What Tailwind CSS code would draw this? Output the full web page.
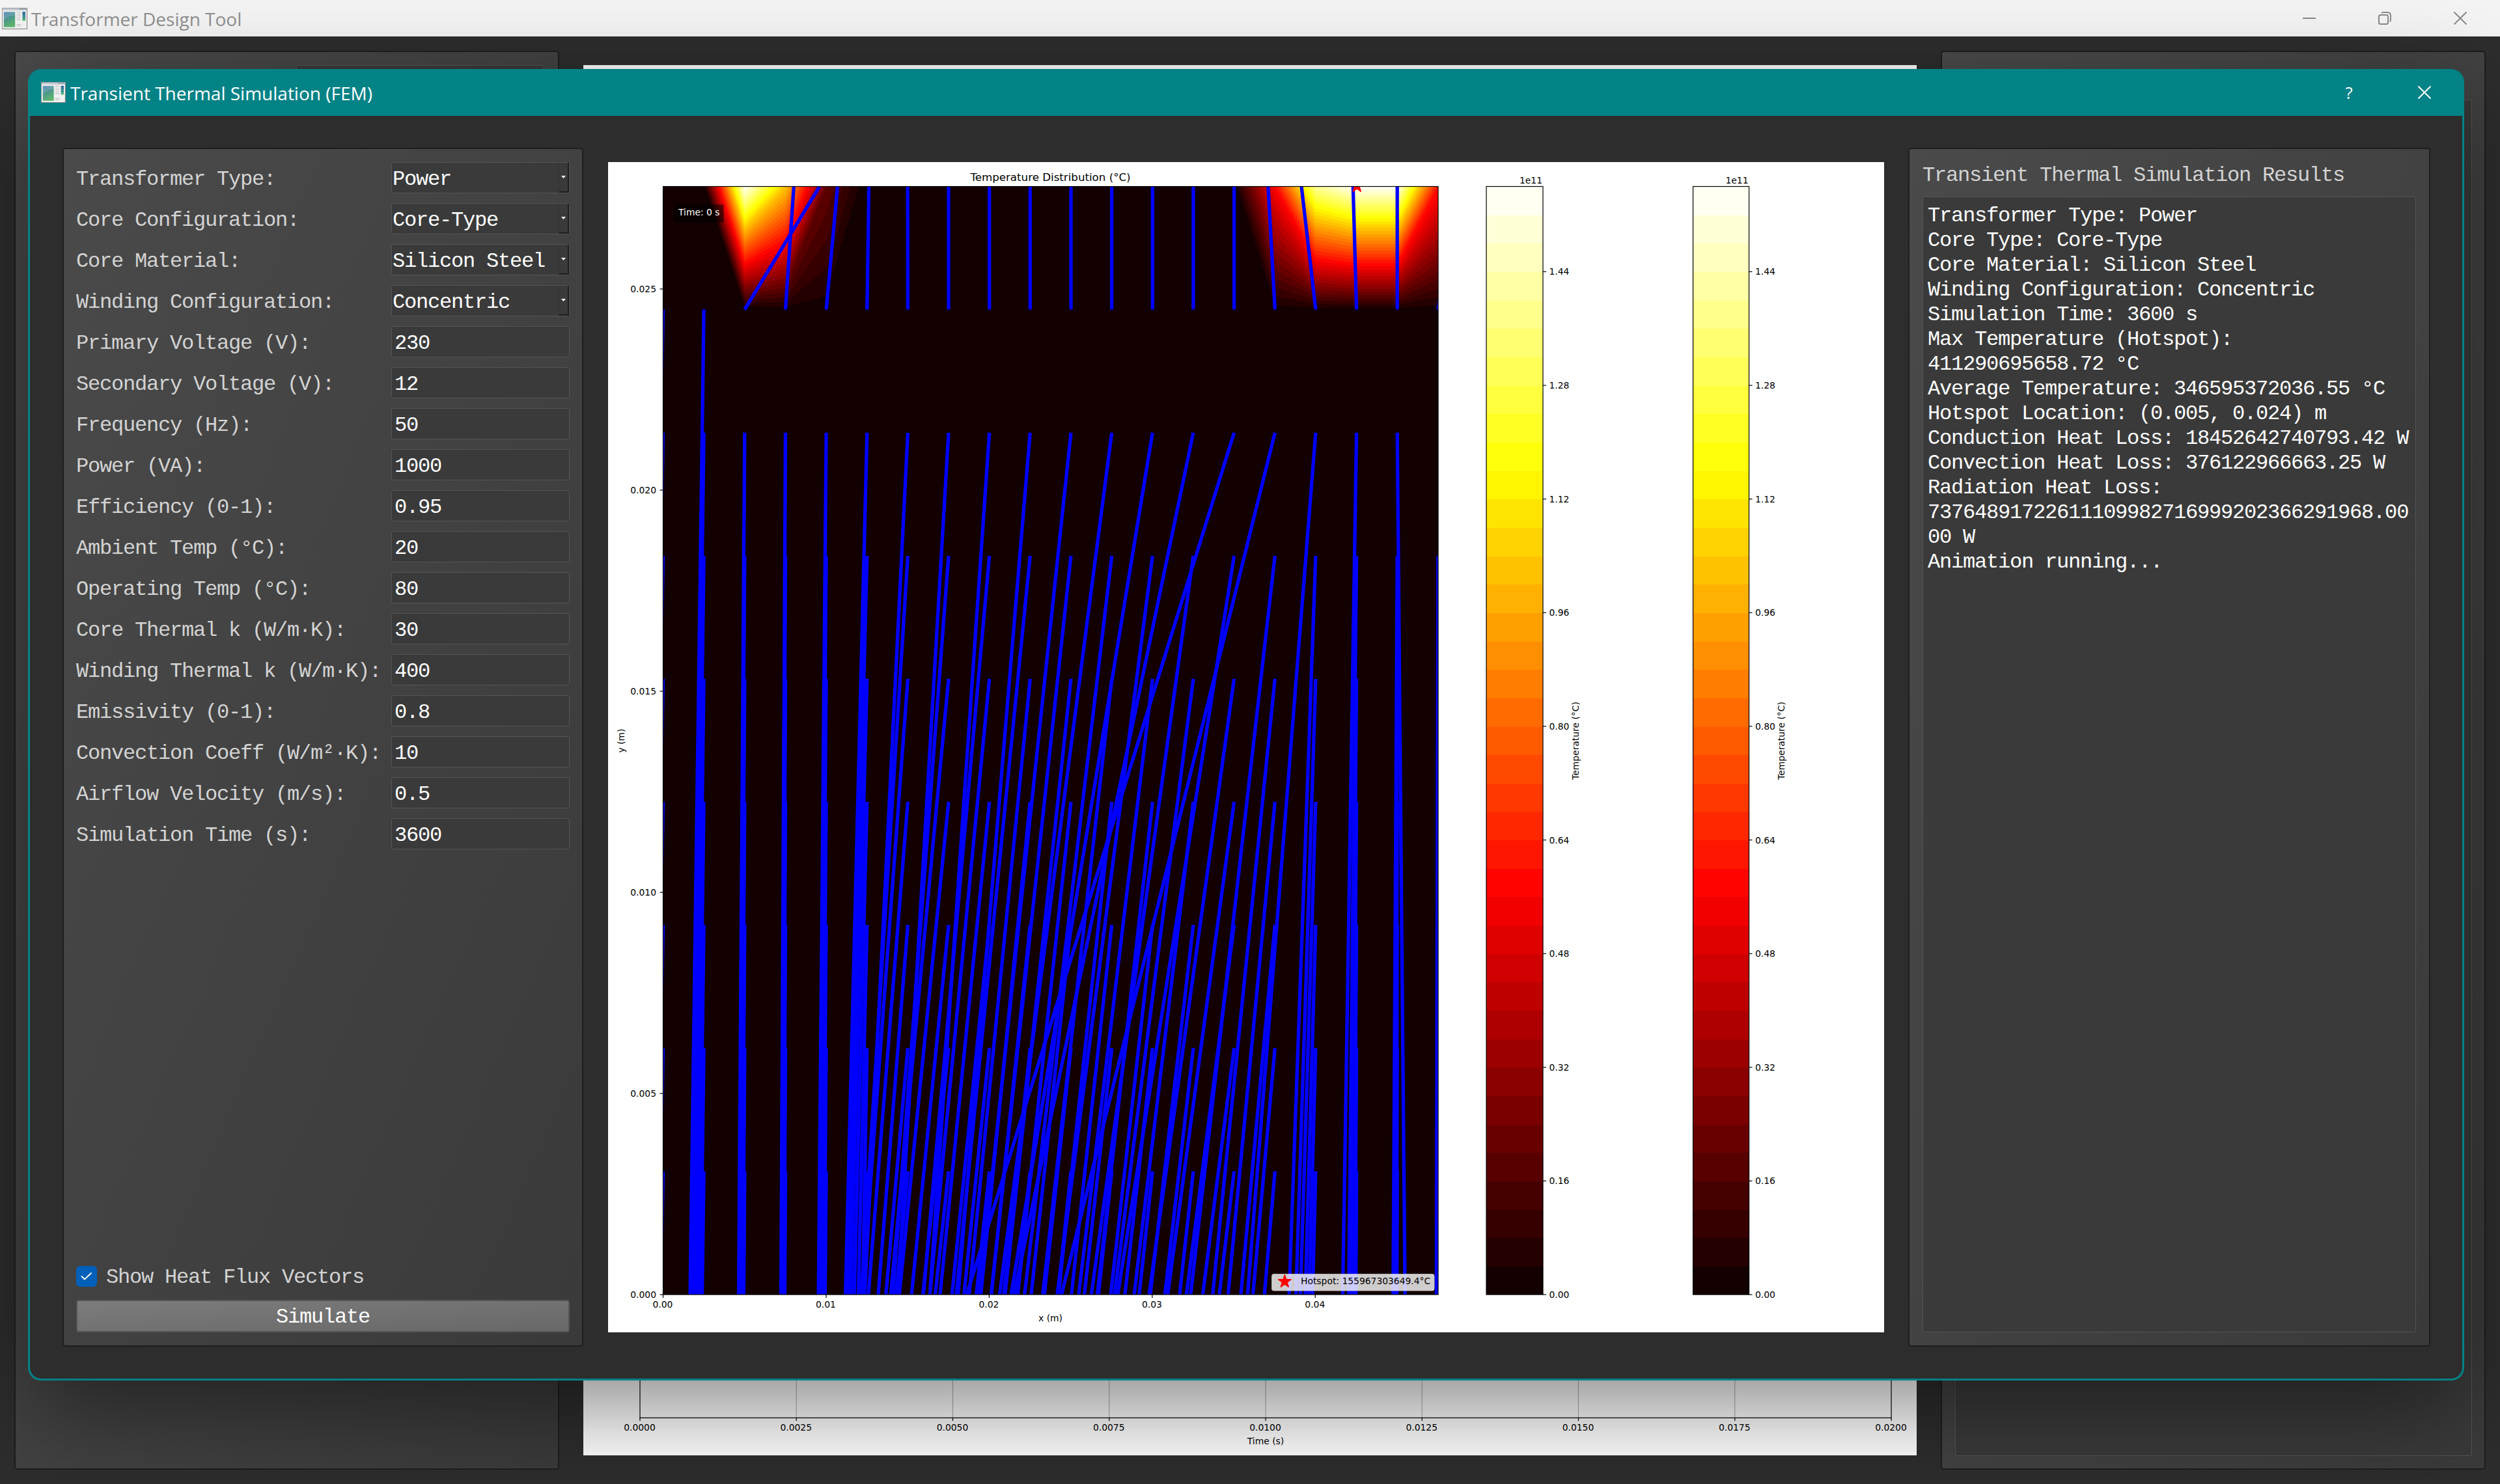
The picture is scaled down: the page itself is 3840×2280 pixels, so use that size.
<!DOCTYPE html>
<html lang="en">
<head>
<meta charset="utf-8">
<title>Transformer Design Tool</title>
<script src="https://cdn.jsdelivr.net/npm/@tailwindcss/browser@4"></script>
</head>
<body class="bg-[#2d2d2d]">
<svg class="absolute w-0 h-0" aria-hidden="true">
  <defs>
    <linearGradient id="ga" x1="0" y1="0" x2="0.4" y2="1"><stop offset="0" stop-color="#3f78b4"/><stop offset="1" stop-color="#5cb56a"/></linearGradient>
    <linearGradient id="gb" x1="0" y1="0" x2="0" y2="1"><stop offset="0" stop-color="#2f62a8"/><stop offset="1" stop-color="#55bd80"/></linearGradient>
    <symbol id="appicon" viewBox="0 0 39 33">
      <rect x="0.5" y="0.5" width="38" height="32" fill="#f1f1f1" stroke="#9a9a9a"/>
      <rect x="1" y="1" width="37" height="3" fill="#c3cad3"/>
      <rect x="27" y="1.3" width="10" height="1.4" fill="#8e99a8"/>
      <rect x="2.5" y="6" width="18" height="24" fill="url(#ga)" stroke="#dfe8e4" stroke-width="0.8"/>
      <path d="M3 19 Q10 11 20 12 V6.500 H3 Z" fill="#ffffff" fill-opacity="0.16"/>
      <path d="M22.500 6.500h6.500M22.500 9.500h6.500M22.500 12.500h6.500M22.500 15.500h6.500M22.500 18.500h6.500M22.500 25.500h6.500M22.500 28h6.500" stroke="#bdbdbd" stroke-width="1.200"/>
      <rect x="31.500" y="6" width="4.500" height="14" fill="url(#gb)"/>
      <path d="M31.500 10h4.500M31.500 15h4.500" stroke="#2a6f80" stroke-width="0.6"/>
      <path d="M0.500 32.500h38v-32" fill="none" stroke="#7c7c7c"/>
    </symbol>
  </defs>
</svg>

<div class="relative w-[3840px] h-[2280px] overflow-hidden bg-[#2d2d2d] font-['Open_Sans',sans-serif]">

  <!-- Main window -->
  <div class="flex flex-col h-full">
    <header class="h-[56px] shrink-0 bg-[#f3f3f3] flex items-center justify-between pl-[3px] pr-[51px] text-[#8f8f8f]">
      <div class="flex items-center gap-[6px]">
        <svg class="w-[39px] h-[33px]"><use href="#appicon"/></svg>
        <span class="text-[28px] leading-[56px] whitespace-nowrap pt-[2px]">Transformer Design Tool</span>
      </div>
      <div class="flex items-center gap-[96px]">
        <svg class="w-[20px] h-[20px]" viewBox="0 0 20 20" fill="none" stroke="#8a8a8a" stroke-width="2"><path d="M0 10h20"/></svg>
        <svg class="w-[20px] h-[20px]" viewBox="0 0 20 20" fill="none" stroke="#8a8a8a" stroke-width="2"><rect x="1" y="5" width="14" height="14" rx="2.500"/><path d="M5 2.200Q5.500 1 8 1H14Q19 1 19 6V12Q19 14.500 17.500 15"/></svg>
        <svg class="w-[20px] h-[20px]" viewBox="0 0 20 20" fill="none" stroke="#8a8a8a" stroke-width="2"><path d="M0.500 0.500l19 19M19.500 0.500l-19 19"/></svg>
      </div>
    </header>
    <main class="flex flex-1 items-start pl-[22px]">
      <section class="w-[837px] h-[2180px] mt-[22px] rounded-[5px] border-2 border-[#1e1e1e] bg-linear-to-br from-[#4a4a4a] to-[#3a3a3a] pl-[431px] pt-[20px]">
        <div class="w-[381px] h-[48px] border border-[#555] rounded-[3px] bg-[#3a3a3a]"></div>
      </section>
      <svg class="w-[2048px] h-[2136px] mt-[44px] ml-[37px] bg-white" viewBox="896 100 2048 2136" id="backplot"></svg>
      <section class="w-[837px] h-[2180px] mt-[22px] ml-[37px] rounded-[5px] border-2 border-[#1e1e1e] bg-linear-to-br from-[#4a4a4a] to-[#3a3a3a] pl-[20px] pt-[73px]">
        <div class="w-[794px] h-[2084px] border border-[#555] rounded-[3px] bg-[#3a3a3a]"></div>
      </section>
    </main>
  </div>

  <!-- Simulation dialog -->
  <div class="absolute left-[43px] top-[106px] w-[3742px] h-[2015px] rounded-[20px] overflow-visible shadow-[0_44px_140px_rgba(0,0,0,0.46)]">
  <div class="w-full h-full rounded-[20px] overflow-hidden border-3 border-t-0 border-[#048387] bg-[#2d2d2d] flex flex-col">
    <header class="h-[72px] shrink-0 bg-[#048387] flex items-center justify-between pl-[17px] pr-[48px] text-white">
      <div class="flex items-center gap-[7px]">
        <svg class="w-[38px] h-[32px]"><use href="#appicon"/></svg>
        <span class="text-[28px] leading-[72px] whitespace-nowrap pt-[1px]">Transient Thermal Simulation (FEM)</span>
      </div>
      <div class="flex items-center gap-[96px]">
        <span class="text-[26px] leading-[72px] w-[20px] text-center">?</span>
        <svg class="w-[20px] h-[20px]" viewBox="0 0 20 20" fill="none" stroke="#fff" stroke-width="2"><path d="M0.500 0.500l19 19M19.500 0.500l-19 19"/></svg>
      </div>
    </header>

    <div class="flex items-start pl-[50px] pt-[49px] font-['Liberation_Mono',monospace] text-[32px] tracking-[-1.2px] text-[#d3d3d3]">
      <section class="w-[800px] h-[1842px] rounded-[5px] border-2 border-[#1e1e1e] bg-linear-to-br from-[#4a4a4a] to-[#3a3a3a] pl-[19px] pr-[19px] pt-[20px] pb-[20px] flex flex-col justify-between">
        <div class="flex flex-col gap-[15px]" id="form"></div>
        <div class="flex flex-col gap-[20px]">
          <div class="flex items-center h-[32px] gap-[14px]">
            <div class="w-[32px] h-[32px] rounded-[6px] bg-[#005fb8] flex items-center justify-center">
              <svg class="w-[18px] h-[14px]" viewBox="0 0 18 14" fill="none" stroke="#fff" stroke-width="1.800" stroke-linecap="round"><path d="M1.500 7l4.500 4.500L16 2"/></svg>
            </div>
            <span class="leading-[32px] pt-[3px]">Show Heat Flux Vectors</span>
          </div>
          <div class="h-[50px] rounded-[4px] border-2 border-[#555] bg-linear-to-br from-[#7c7c7c] to-[#686868] text-white text-center leading-[46px]"><span class="relative top-[2px]">Simulate</span></div>
        </div>
      </section>

      <svg class="w-[1960px] h-[1798px] mt-[22px] ml-[38px] bg-white shrink-0" viewBox="934 249 1960 1798" id="plot"></svg>

      <section class="w-[802px] h-[1842px] ml-[37px] rounded-[5px] border-2 border-[#1e1e1e] bg-linear-to-br from-[#4a4a4a] to-[#3a3a3a] pl-[20px] pt-[20px]">
        <div class="leading-[42px] whitespace-pre">Transient Thermal Simulation Results</div>
        <div class="mt-[11px] w-[758px] h-[1745px] border border-[#555] rounded-[3px] bg-[#3a3a3a] text-white pl-[7px] pt-[10px] leading-[38px] whitespace-pre">Transformer Type: Power
Core Type: Core-Type
Core Material: Silicon Steel
Winding Configuration: Concentric
Simulation Time: 3600 s
Max Temperature (Hotspot):
411290695658.72 °C
Average Temperature: 346595372036.55 °C
Hotspot Location: (0.005, 0.024) m
Conduction Heat Loss: 18452642740793.42 W
Convection Heat Loss: 376122966663.25 W
Radiation Heat Loss:
73764891722611109982716999202366291968.00
00 W
Animation running...</div>
      </section>
    </div>
  </div>
  </div>
</div>

<script>
// Form rows: [label, value, isSelect]
const rows = [
  ['Transformer Type:', 'Power', 1], ['Core Configuration:', 'Core-Type', 1],
  ['Core Material:', 'Silicon Steel', 1], ['Winding Configuration:', 'Concentric', 1],
  ['Primary Voltage (V):', '230'], ['Secondary Voltage (V):', '12'], ['Frequency (Hz):', '50'],
  ['Power (VA):', '1000'], ['Efficiency (0-1):', '0.95'], ['Ambient Temp (°C):', '20'],
  ['Operating Temp (°C):', '80'], ['Core Thermal k (W/m·K):', '30'], ['Winding Thermal k (W/m·K):', '400'],
  ['Emissivity (0-1):', '0.8'], ['Convection Coeff (W/m²·K):', '10'], ['Airflow Velocity (m/s):', '0.5'],
  ['Simulation Time (s):', '3600']
];
document.getElementById('form').innerHTML = rows.map(([l, v, s]) =>
  `<div class="flex h-[48px]"><label class="w-[484px] shrink-0 whitespace-pre leading-[48px] pt-[3px]">${l}</label>` +
  (s ? `<div class="w-[274px] shrink-0 flex justify-between border border-[#555] rounded-[3px] bg-[#3a3a3a] text-white"><span class="pl-px pt-[3px] leading-[46px]">${v}</span><span class="w-[16px] border-l border-l-[#333] border-r-2 border-b-2 border-r-[#1e1e1e] border-b-[#1e1e1e] flex items-center justify-center"><svg class="w-[7px] h-[4px]" viewBox="0 0 7 4"><path d="M0 0h7L3.500 4z" fill="#fff"/></svg></span></div>`
     : `<div class="w-[274px] shrink-0 border border-[#555] rounded-[3px] bg-[#3a3a3a] text-white pl-[4px] pt-[3px] leading-[46px]">${v}</div>`) +
  `</div>`).join('');

const F = `font-family="DejaVu Sans, sans-serif" font-size="13.89" letter-spacing="0"`;
const txt = (x, y, s, a = 'start', extra = '') => `<text x="${x}" y="${y}" text-anchor="${a}" ${F} ${extra}>${s}</text>`;
const line = (x1, y1, x2, y2, c = '#000', w = 1.2) => `<line x1="${x1}" y1="${y1}" x2="${x2}" y2="${y2}" stroke="${c}" stroke-width="${w}"/>`;

// "hot" colour map, t in 0..1
function hot(t) {
  const r = Math.min(1, 0.0416 + 0.9584 * t / 0.365079);
  const g = Math.max(0, Math.min(1, (t - 0.365079) / 0.380953));
  const b = Math.max(0, Math.min(1, (t - 0.746032) / 0.253968));
  return `rgb(${Math.round(r * 255)},${Math.round(g * 255)},${Math.round(b * 255)})`;
}

// Temperature plot
const X0 = 1018.5, DX = 62.65, Y0 = 286.5, Y1 = 1989, XR = 2209;
const cx = i => X0 + DX * i;
const ROW = [286.5, 475.5, 664.8, 854, 1043, 1232, 1421, 1610.3, 1799.6];
let p = `<defs><clipPath id="ax"><rect x="${X0}" y="${Y0}" width="${XR - X0}" height="${Y1 - Y0}"/></clipPath></defs>`;
p += `<rect x="${X0}" y="${Y0}" width="${XR - X0}" height="${Y1 - Y0}" fill="${hot(0.5 / 39)}"/>`;

const top_ = new Array(20).fill(0), bot = new Array(20).fill(0);
Object.entries({2: 1.56, 3: 1.03, 4: 0.2, 15: 0.57, 16: 1.4, 17: 1.56, 18: 1.56, 19: 0.6}).forEach(([k, v]) => top_[k] = v);
[3, 4, 15, 16, 17, 18, 19].forEach(k => bot[k] = 0.02);
p += `<g clip-path="url(#ax)" shape-rendering="crispEdges">`;
for (let c = 0; c < 19; c++) {
  const q = [[cx(c), ROW[0], top_[c]], [cx(c + 1), ROW[0], top_[c + 1]], [cx(c + 1), ROW[1], bot[c + 1]], [cx(c), ROW[1], bot[c]]];
  for (let k = 1; k < 39; k++) {
    const L = k * 0.04, out = [];
    for (let e = 0; e < 4; e++) {
      const a = q[e], b = q[(e + 1) % 4];
      if (a[2] >= L) out.push([a[0], a[1]]);
      if ((a[2] >= L) !== (b[2] >= L)) {
        const f = (L - a[2]) / (b[2] - a[2]);
        out.push([a[0] + f * (b[0] - a[0]), a[1] + f * (b[1] - a[1])]);
      }
    }
    if (out.length > 2) p += `<polygon points="${out.map(o => o[0].toFixed(1) + ',' + o[1].toFixed(1)).join(' ')}" fill="${hot((k + 0.5) / 39)}"/>`;
  }
}
p += `</g>`;

// Heat flux vectors; leftward drift per unit of descent, rows 2..8 for each column
const S = {
  0: [.02, .02, .02, .02, .02, .02, .02],
  1: [.0139, .0139, .0139, .0139, .0139, .0139, .0139],
  2: [.007, .007, .007, .007, .007, .007, .007],
  3: [.0052, .0052, .0052, .0052, .0052, .0052, .0052],
  4: [.009, .009, .009, .009, .009, .009, .009],
  5: [.025, .026, .0265, .026, .0235, .0175, .02],
  6: [.050, .063, .074, .080, .080, .089, .095],
  7: [.059, .0755, .094, .1, .1, .104, .108],
  8: [.069, .0893, .0966, .1, .101, .103, .106],
  9: [.0836, .1, .099, .1, .105, .107, .106],
  10: [.106, .108, .107, .108, .1075, .108, .106],
  11: [.130, .118, .112, .108, .109, .111, .108],
  12: [.164, .129, .12, .112, .113, .112, .108],
  13: [.208, .138, .128, .12, .1165, .1154, .1115],
  14: [.31, .1575, .138, .1347, .129, .127, .12],
  15: [.2475, .114, .101, .095, .092, .089, .0847],
  16: [.079, .036, .032, .031, .028, .027, .025],
  17: [.016, .0106, .0085, .0078, .0065, .006, .005],
  18: [-.009, .0056, .0045, .004, .003, .003, .003],
  19: [0, .0022, .0018, .0015, .001, .001, .001]
};
const blue = (x1, y1, x2, y2) => line(x1.toFixed(1), y1, x2.toFixed(1), y2, '#0000ff', 5.3);
p += `<g clip-path="url(#ax)">`;
const upTop = {2: 1258.8, 3: 1219.3, 4: 1286.5, 5: 1334.6, 6: 1394.2, 15: 1947.8, 16: 1999, 17: 2078.3};
for (let c = 2; c < 19; c++) p += blue(cx(c), ROW[1], upTop[c] || cx(c), Y0);
p += blue(cx(0), ROW[1], cx(0) - 30, Y1) + blue(cx(1), ROW[1], 1060, Y1) + blue(cx(19), ROW[1], cx(19) + 30, Y0);
for (let c = 0; c < 20; c++) for (let r = 2; r < 9; r++) {
  if (c === 19 && r === 2) continue;
  p += blue(cx(c), ROW[r], cx(c) - S[c][r - 2] * (Y1 + 6 - ROW[r]), Y1 + 6);
}
const star = (x, y, R) => {
  let s = '';
  for (let i = 0; i < 10; i++) {
    const a = -Math.PI / 2 + i * Math.PI / 5, q = i % 2 ? R * 0.382 : R;
    s += (x + q * Math.cos(a)).toFixed(2) + ',' + (y + q * Math.sin(a)).toFixed(2) + ' ';
  }
  return `<polygon points="${s}" fill="#ff0000" stroke="#ff0000" stroke-width="1.4" stroke-linejoin="bevel"/>`;
};
p += star(2084.3, 286, 10.5) + `</g>`;
p += `<rect x="${X0}" y="${Y0}" width="${XR - X0}" height="${Y1 - Y0}" fill="none" stroke="#000" stroke-width="1.200"/>`;
p += `<text x="1613.500" y="277.500" text-anchor="middle" font-family="DejaVu Sans, sans-serif" font-size="16.670" letter-spacing="0">Temperature Distribution (°C)</text>`;
p += `<rect x="1036" y="315" width="75" height="26" fill="#000" fill-opacity="0.5" stroke="#000" stroke-opacity="0.5"/>` + txt(1042, 331, 'Time: 0 s', 'start', 'fill="#fff"');
for (let i = 0; i < 5; i++) { const x = X0 + 250.45 * i; p += line(x, Y1, x, Y1 + 5) + txt(x - 0.5, 2009, '0.0' + i, 'middle'); }
for (let i = 0; i < 6; i++) { const y = Y1 - 309 * i; p += line(X0 - 5, y, X0, y) + txt(1008, y + 5, (i * 0.005).toFixed(3), 'end'); }
p += txt(1613.5, 2030, 'x (m)', 'middle') + `<g transform="translate(959 1138) rotate(-90)">${txt(0, 0, 'y (m)', 'middle')}</g>`;
p += `<rect x="1953.500" y="1957.500" width="249.500" height="25.500" rx="3" fill="#fff" fill-opacity="0.8" stroke="#ccc" stroke-opacity="0.8"/>` + star(1973.3, 1969, 10.5) + txt(1998, 1973, 'Hotspot: 155967303649.4°C');

// Colour bars
[[2283, 2370, 2425], [2600.5, 2686.5, 2741]].forEach(([a, b, t]) => {
  const h = (Y1 - Y0) / 39;
  for (let k = 0; k < 39; k++) p += `<rect x="${a}" y="${(Y1 - h * (k + 1)).toFixed(2)}" width="${b - a}" height="${(h + (k ? 0.6 : 0)).toFixed(2)}" fill="${hot((k + 0.5) / 39)}" shape-rendering="crispEdges"/>`;
  p += `<rect x="${a}" y="${Y0}" width="${b - a}" height="${Y1 - Y0}" fill="none" stroke="#000" stroke-width="1.200"/>`;
  for (let k = 0; k < 10; k++) { const y = Y1 - 4 * h * k; p += line(b, y, b + 5, y) + txt(b + 9.5, y + 5, (k * 0.16).toFixed(2)); }
  p += txt(b - 1, 282, '1e11', 'end') + `<g transform="translate(${t} 1138) rotate(-90)">${txt(0, 0, 'Temperature (°C)', 'middle')}</g>`;
});
document.getElementById('plot').innerHTML = p;

// Lower axis of the main window's waveform plot
let b = '';
for (let i = 0; i < 9; i++) {
  const x = 983 + 240.25 * i;
  b += (i > 0 && i < 8 ? line(x, 300, x, 2178, '#b0b0b0', 1.1) : line(x, 300, x, 2178)) + line(x, 2178, x, 2183) + txt(x - 0.5, 2198, (i * 0.0025).toFixed(4), 'middle');
}
b += line(982.4, 2178.4, 2905.6, 2178.4) + txt(1944, 2218.5, 'Time (s)', 'middle');
document.getElementById('backplot').innerHTML = b;
</script>
</body>
</html>
